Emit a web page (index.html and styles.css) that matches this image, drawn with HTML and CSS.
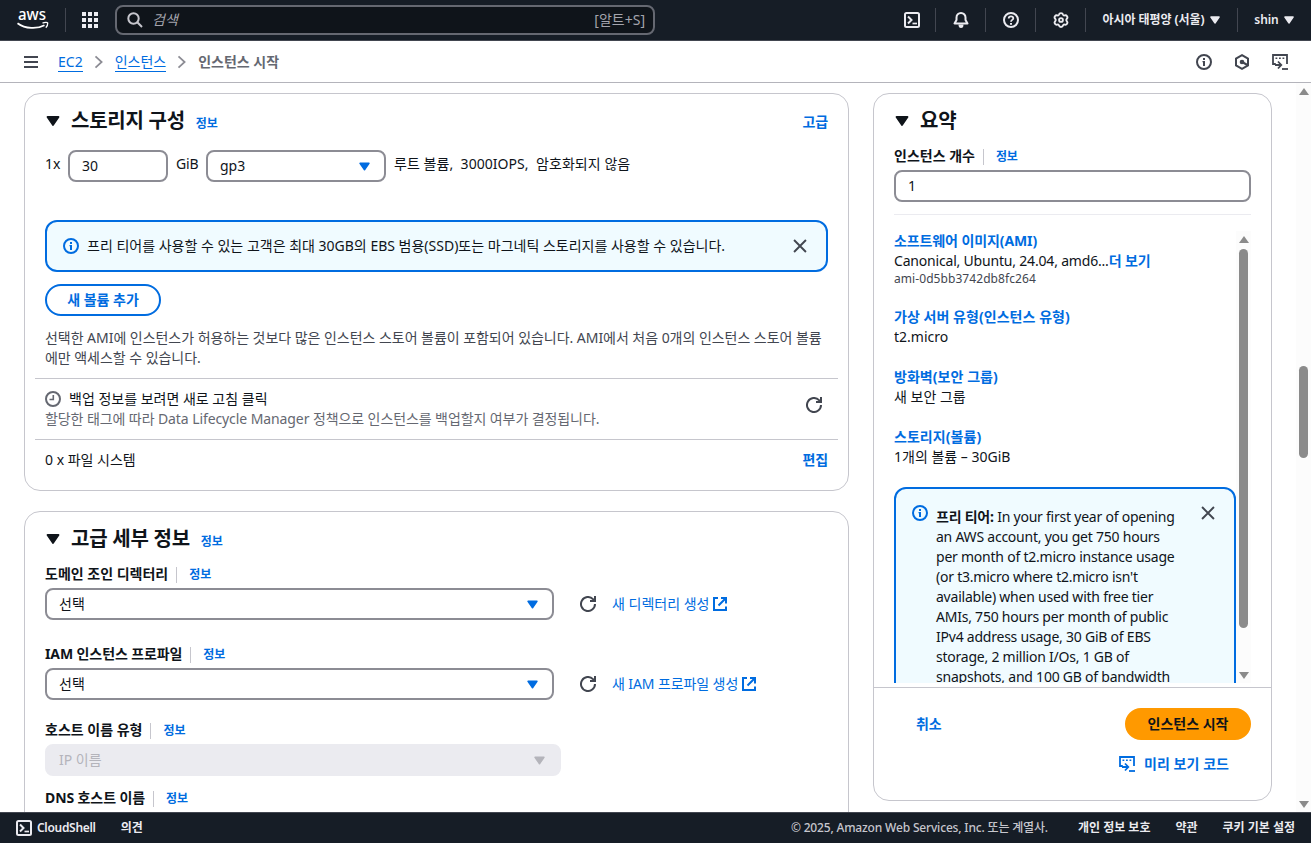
FILE: index.html
```html
<!DOCTYPE html>
<html lang="ko">
<head>
    <meta charset="UTF-8">
    <meta name="viewport" content="width=device-width, initial-scale=1.0">
    <title>인스턴스 시작 | EC2</title>
    <link rel="stylesheet" href="styles.css">
</head>
<body>
    <!-- Shared icons -->
    <svg class="sprite" xmlns="http://www.w3.org/2000/svg">
        <symbol id="i-caret" viewBox="0 0 16 16"><path d="M2.500 4h11L8 12z" fill="currentColor" stroke="currentColor" stroke-width="1.800" stroke-linejoin="round"/></symbol>
        <symbol id="i-shell" viewBox="0 0 16 16"><g fill="none" stroke="currentColor" stroke-width="2"><rect x="1" y="1" width="14" height="14" rx="1.5"/><path d="M4 4.500 7.500 8 4 11.500"/><path d="M8.500 11.500H13" stroke-width="1.700"/></g></symbol>
        <symbol id="i-info" viewBox="0 0 16 16"><circle cx="8" cy="8" r="7" fill="none" stroke="currentColor" stroke-width="2"/><path d="M7 4h2v2H7zM6.500 7H9v5H7V8.200h-.5z" fill="currentColor"/></symbol>
        <symbol id="i-close" viewBox="0 0 16 16"><path d="m1.200 1.200 13.600 13.600M14.800 1.200 1.200 14.800" fill="none" stroke="currentColor" stroke-width="2.200"/></symbol>
        <symbol id="i-refresh" viewBox="0 0 16 16"><g fill="none" stroke="currentColor" stroke-width="2"><path d="M15 8a7 7 0 1 1-2-4.900L14.600 5"/><path d="M15 0v5h-5"/></g></symbol>
        <symbol id="i-external" viewBox="0 0 16 16"><g fill="none" stroke="currentColor" stroke-width="2"><path d="M6 2H2v12h12v-3.500"/><path d="M9 2h5v5.500M14 2 6.500 9.500"/></g></symbol>
        <symbol id="i-code" viewBox="0 0 16 16"><g fill="none" stroke="currentColor" stroke-width="1.800"><path d="M3.800 10H1V1h14v9"/><path d="M3 11h6M6 7.500 9.300 11 6 14.500"/><path d="M10 15h6"/></g><path d="M3.500 3.500h1.800v1.500H3.500zM7 3.500h1.800v1.500H7zM10.500 3.500h1.800v1.500h-1.800z" fill="currentColor"/></symbol>
        <symbol id="i-chevron" viewBox="0 0 16 16"><path d="m4 1.500 7 6.500-7 6.500" fill="none" stroke="currentColor" stroke-width="2"/></symbol>
    </svg>

    <!-- Global navigation -->
    <header class="topnav">
        <svg class="aws-logo" viewBox="0 0 32 22">
            <text x="1" y="11" textLength="28" lengthAdjust="spacingAndGlyphs">aws</text>
            <path d="M.5 14.200C8.500 20 20 20.300 27.500 16.200" fill="none" stroke="#fff" stroke-width="1.700"/>
            <path d="M25.500 14.200c2-1 5.300-1 5.200-.2.100 2-.6 3.600-1.900 4.800" fill="none" stroke="#fff" stroke-width="1.300"/>
        </svg>
        <span class="nav-line"></span>
        <svg class="apps" viewBox="0 0 16 16" fill="currentColor"><path d="M0 0h4v4H0zM6 0h4v4H6zM12 0h4v4h-4zM0 6h4v4H0zM6 6h4v4H6zM12 6h4v4h-4zM0 12h4v4H0zM6 12h4v4H6zM12 12h4v4h-4z"/></svg>
        <div class="search">
            <svg class="icon" viewBox="0 0 16 16"><g fill="none" stroke="currentColor" stroke-width="2"><circle cx="6.500" cy="6.500" r="5.200"/><path d="m10.300 10.300 4.700 4.700"/></g></svg>
            <em>검색</em>
            <span class="shortcut">[알트+S]</span>
        </div>
        <nav class="nav-tools">
            <a class="tool"><svg class="icon"><use href="#i-shell"/></svg></a>
            <a class="tool"><svg class="icon" viewBox="0 0 16 16"><path d="M1.500 11.500h13L12.500 8V5.500a4.500 4.500 0 0 0-9 0V8z" fill="none" stroke="currentColor" stroke-width="2" stroke-linejoin="round"/><path d="M5.500 12.500h5a2.500 3.500 0 0 1-5 0z" fill="currentColor"/></svg></a>
            <a class="tool"><svg class="icon" viewBox="0 0 16 16"><g fill="none" stroke="currentColor" stroke-width="2"><circle cx="8" cy="8" r="7"/><path d="M5.700 6.500c0-3 4.600-2.800 4.600-.2C10.300 8 8 7.800 8 9.800" stroke-width="1.800"/></g><path d="M7 11h2v1.800H7z" fill="currentColor"/></svg></a>
            <a class="tool"><svg class="icon" viewBox="0 0 16 16"><g fill="none" stroke="currentColor" stroke-width="1.900" stroke-linejoin="round"><path d="M6 2.500C6.500.6 9.500.6 10 2.500c.3.900.9 1.100 1.700.9 2-.6 3.500 1.900 2.200 3.300-.7.800-.7 1.800 0 2.600 1.300 1.400-.2 3.900-2.200 3.300-.8-.2-1.400 0-1.700.9-.5 1.900-3.500 1.900-4 0-.3-.9-.9-1.100-1.700-.9-2 .6-3.500-1.900-2.200-3.300.7-.8.7-1.800 0-2.600C.8 5.300 2.300 2.800 4.300 3.400 5.100 3.600 5.700 3.400 6 2.500z"/><circle cx="8" cy="8" r="1.900"/></g></svg></a>
            <a class="tool region">아시아 태평양 (서울) <svg class="caret"><use href="#i-caret"/></svg></a>
            <a class="tool user">shin <svg class="caret"><use href="#i-caret"/></svg></a>
        </nav>
    </header>

    <!-- Breadcrumbs -->
    <div class="crumb-bar">
        <svg class="menu" viewBox="0 0 14 14"><path d="M0 2h14M0 7h14M0 12h14" stroke="currentColor" stroke-width="2"/></svg>
        <a class="crumb">EC2</a>
        <svg class="sep"><use href="#i-chevron"/></svg>
        <a class="crumb">인스턴스</a>
        <svg class="sep"><use href="#i-chevron"/></svg>
        <span class="crumb-current">인스턴스 시작</span>
        <div class="crumb-tools">
            <svg class="icon"><use href="#i-info"/></svg>
            <svg class="icon" viewBox="0 0 16 16"><g fill="none" stroke="currentColor" stroke-width="2"><path d="m8 1.200 6 3.400v6.800l-6 3.400-6-3.400V4.600z"/><path d="m8 8 5.500 3"/></g><circle cx="8" cy="8" r="2.300" fill="currentColor"/></svg>
            <svg class="icon"><use href="#i-code"/></svg>
        </div>
    </div>

    <main class="page">
        <div class="forms">
            <!-- Storage -->
            <section class="card storage">
                <div class="card-head">
                    <svg class="toggle"><use href="#i-caret"/></svg>
                    <h2>스토리지 구성</h2>
                    <a class="info">정보</a>
                    <a class="action">고급</a>
                </div>
                <div class="volume">
                    <span class="count">1x</span>
                    <div class="field size">30</div>
                    <span class="unit">GiB</span>
                    <div class="field select type">gp3<svg class="caret"><use href="#i-caret"/></svg></div>
                    <span class="volume-note">루트 볼륨,&nbsp; 3000IOPS,&nbsp; 암호화되지 않음</span>
                </div>
                <div class="alert storage-alert">
                    <svg class="icon"><use href="#i-info"/></svg>
                    <p>프리 티어를 사용할 수 있는 고객은 최대 30GB의 EBS 범용(SSD)또는 마그네틱 스토리지를 사용할 수 있습니다.</p>
                    <svg class="close"><use href="#i-close"/></svg>
                </div>
                <button class="btn outline">새 볼륨 추가</button>
                <p class="note">선택한 AMI에 인스턴스가 허용하는 것보다 많은 인스턴스 스토어 볼륨이 포함되어 있습니다. AMI에서 처음 0개의 인스턴스 스토어 볼륨<br>에만 액세스할 수 있습니다.</p>
                <div class="strip backup">
                    <div>
                        <p class="backup-title"><svg class="icon" viewBox="0 0 16 16"><g fill="none" stroke="currentColor" stroke-width="2"><circle cx="8" cy="8" r="7"/><path d="M8.300 4v4.500H4.500" stroke-width="1.600"/></g></svg>백업 정보를 보려면 새로 고침 클릭</p>
                        <p class="muted">할당한 태그에 따라 Data Lifecycle Manager 정책으로 인스턴스를 백업할지 여부가 결정됩니다.</p>
                    </div>
                    <svg class="icon refresh"><use href="#i-refresh"/></svg>
                </div>
                <div class="strip files">
                    <span>0 x 파일 시스템</span>
                    <a class="action">편집</a>
                </div>
            </section>

            <!-- Advanced details -->
            <section class="card advanced">
                <div class="card-head">
                    <svg class="toggle"><use href="#i-caret"/></svg>
                    <h2>고급 세부 정보</h2>
                    <a class="info">정보</a>
                </div>
                <div class="label"><b>도메인 조인 디렉터리</b><a class="info">정보</a></div>
                <div class="field-row">
                    <div class="field select">선택<svg class="caret"><use href="#i-caret"/></svg></div>
                    <svg class="icon refresh"><use href="#i-refresh"/></svg>
                    <a class="create">새 디렉터리 생성<svg class="icon"><use href="#i-external"/></svg></a>
                </div>
                <div class="label"><b class="mixed">IAM 인스턴스 프로파일</b><a class="info">정보</a></div>
                <div class="field-row">
                    <div class="field select">선택<svg class="caret"><use href="#i-caret"/></svg></div>
                    <svg class="icon refresh"><use href="#i-refresh"/></svg>
                    <a class="create mixed">새 IAM 프로파일 생성<svg class="icon"><use href="#i-external"/></svg></a>
                </div>
                <div class="label host"><b>호스트 이름 유형</b><a class="info">정보</a></div>
                <div class="field select disabled">IP 이름<svg class="caret"><use href="#i-caret"/></svg></div>
                <div class="label dns"><b class="mixed">DNS 호스트 이름</b><a class="info">정보</a></div>
            </section>
        </div>

        <!-- Summary -->
        <aside class="card summary">
            <div class="summary-top">
                <div class="card-head">
                    <svg class="toggle"><use href="#i-caret"/></svg>
                    <h2>요약</h2>
                </div>
                <div class="label"><b>인스턴스 개수</b><a class="info">정보</a></div>
                <div class="field">1</div>
            </div>
            <div class="summary-scroll">
                <div class="summary-items">
                    <dl>
                        <dt>소프트웨어 이미지(AMI)</dt>
                        <dd><span class="latin">Canonical, Ubuntu, 24.04, amd6...</span><a class="action">더 보기</a></dd>
                        <dd class="ami-id">ami-0d5bb3742db8fc264</dd>
                        <dt class="wide">가상 서버 유형(인스턴스 유형)</dt>
                        <dd>t2.micro</dd>
                        <dt class="wide">방화벽(보안 그룹)</dt>
                        <dd>새 보안 그룹</dd>
                        <dt class="wide">스토리지(볼륨)</dt>
                        <dd>1개의 볼륨 – 30GiB</dd>
                    </dl>
                    <div class="alert tier-alert">
                        <svg class="icon"><use href="#i-info"/></svg>
                        <p><b>프리 티어:</b> In your first year of opening<br>an AWS account, you get 750 hours<br>per month of t2.micro instance usage<br>(or t3.micro where t2.micro isn't<br>available) when used with free tier<br>AMIs, 750 hours per month of public<br>IPv4 address usage, 30 GiB of EBS<br>storage, 2 million I/Os, 1 GB of<br>snapshots, and 100 GB of bandwidth</p>
                        <svg class="close"><use href="#i-close"/></svg>
                    </div>
                </div>
                <div class="scrollbar inner">
                    <span class="arrow up"></span>
                    <span class="thumb"></span>
                    <span class="arrow down"></span>
                </div>
            </div>
            <div class="summary-actions">
                <div class="buttons">
                    <a class="action">취소</a>
                    <button class="btn primary">인스턴스 시작</button>
                </div>
                <a class="action preview"><svg class="icon"><use href="#i-code"/></svg>미리 보기 코드</a>
            </div>
        </aside>

        <div class="scrollbar outer">
            <span class="arrow up"></span>
            <span class="thumb"></span>
            <span class="arrow down"></span>
        </div>
    </main>

    <footer class="footer">
        <svg class="icon"><use href="#i-shell"/></svg>
        <a class="cloudshell">CloudShell</a>
        <a class="feedback">의견</a>
        <span class="copyright">© 2025, Amazon Web Services, Inc. 또는 계열사.</span>
        <a>개인 정보 보호</a>
        <a>약관</a>
        <a>쿠키 기본 설정</a>
    </footer>
</body>
</html>
```
FILE: styles.css
```css
* {
    box-sizing: border-box;
}

body {
    margin: 0;
    height: 843px;
    display: flex;
    flex-direction: column;
    overflow: hidden;
    background: #fff;
    color: #0f141a;
    font-family: "Noto Sans", "Noto Sans CJK KR", sans-serif;
    font-size: 14px;
    line-height: 20px;
}

p, h2, dl, dd {
    margin: 0;
}

svg {
    display: block;
    flex: none;
}

.sprite {
    display: none;
}

.icon {
    width: 16px;
    height: 16px;
}

.caret {
    width: 12px;
    height: 12px;
}

.mixed {
    letter-spacing: -0.1px;
}

.latin {
    letter-spacing: -0.19px;
}

/* Global navigation */
.topnav {
    height: 41px;
    flex: none;
    display: flex;
    align-items: center;
    padding-left: 17px;
    background: #161d26;
    border-bottom: 1px solid #424650;
    color: #ebebf0;
}

.aws-logo {
    width: 32px;
    height: 22px;
    overflow: visible;
    fill: #fff;
    font: 500 17px "Noto Sans", sans-serif;
}

.nav-line {
    width: 1px;
    height: 24px;
    margin: 0 16px;
    background: #424650;
}

.apps {
    width: 16px;
    height: 16px;
}

.search {
    width: 540px;
    height: 30px;
    margin-left: 17px;
    padding: 0 8px 0 10px;
    display: flex;
    align-items: center;
    gap: 9px;
    background: #0f141a;
    border: 2px solid #656871;
    border-radius: 8px;
    color: #a4a4ad;
}

.search .icon {
    color: #c6c6cd;
}

.shortcut {
    margin-left: auto;
}

.nav-tools {
    margin-left: auto;
    display: flex;
    align-items: center;
    font-size: 12px;
    font-weight: 700;
    letter-spacing: -0.05px;
}

.tool {
    width: 50px;
    height: 24px;
    display: flex;
    align-items: center;
    justify-content: center;
    gap: 4px;
    border-left: 1px solid #424650;
}

.tool:first-child {
    padding-left: 4px;
    border-left: none;
}

.region {
    width: 152px;
}

.user {
    width: 74px;
    font-weight: 600;
}

/* Breadcrumbs */
.crumb-bar {
    height: 42px;
    flex: none;
    display: flex;
    align-items: center;
    padding: 0 23px 0 24px;
    border-bottom: 1px solid #b4b4bb;
    color: #424650;
}

.menu {
    width: 14px;
    height: 14px;
    margin-right: 20px;
}

.crumb {
    padding-top: 1px;
    line-height: 19px;
    color: #006ce0;
    border-bottom: 1px solid #006ce0;
}

.sep {
    width: 14px;
    height: 14px;
    margin: 0 9px;
    color: #8c8c94;
}

.crumb-current {
    color: #656871;
    font-weight: 700;
}

.crumb-tools {
    margin-left: auto;
    display: flex;
    gap: 22px;
}

/* Page body */
.page {
    height: 729px;
    flex: none;
    display: flex;
    padding: 10px 0 0 24px;
    overflow: hidden;
}

.forms {
    width: 825px;
    display: flex;
    flex-direction: column;
    gap: 20px;
}

.card {
    border: 1px solid #c6c6cd;
    border-radius: 16px;
    background: #fff;
}

.card-head {
    height: 24px;
    display: flex;
    align-items: center;
}

.card-head h2 {
    margin: 0 11px 0 10px;
    font-size: 20px;
    line-height: 24px;
    letter-spacing: -0.25px;
}

.toggle {
    width: 16px;
    height: 16px;
}

.info {
    padding-top: 6px;
    color: #006ce0;
    font-size: 12px;
    font-weight: 700;
    letter-spacing: -0.1px;
}

.action {
    color: #006ce0;
    font-weight: 700;
    letter-spacing: -0.1px;
}

.card-head .action {
    margin-left: auto;
    padding-top: 1px;
}

.field {
    height: 32px;
    display: flex;
    align-items: center;
    padding: 0 12px;
    border: 2px solid #8c8c94;
    border-radius: 8px;
}

.select {
    justify-content: space-between;
}

.btn {
    height: 32px;
    padding: 0 20px;
    border: 2px solid #006ce0;
    border-radius: 16px;
    background: #fff;
    color: #006ce0;
    font: inherit;
    font-weight: 700;
}

.alert {
    display: flex;
    border: 2px solid #006ce0;
    border-radius: 12px;
    background: #f0fbff;
}

.alert .icon {
    color: #006ce0;
}

.close {
    width: 14px;
    height: 14px;
    margin-left: auto;
    color: #424650;
}

/* Storage card */
.storage {
    height: 398px;
    flex: none;
    padding: 15px 20px 0;
}

.volume {
    margin-top: 17px;
    display: flex;
    height: 32px;
}

.count,
.unit,
.volume-note {
    padding-top: 4px;
}

.count {
    width: 23px;
}

.size {
    width: 100px;
}

.unit {
    width: 38px;
    padding-left: 8px;
    letter-spacing: -0.2px;
}

.type {
    width: 180px;
    margin-right: 8px;
}

.volume-note {
    letter-spacing: 0.05px;
}

.storage-alert {
    height: 52px;
    margin-top: 38px;
    align-items: center;
    padding: 0 19px 0 16px;
}

.storage-alert p {
    margin-left: 8px;
}

.outline {
    width: 116px;
    margin-top: 12px;
    display: block;
}

.note {
    margin: 12px 0 10px;
    color: #424650;
    letter-spacing: -0.04px;
    white-space: nowrap;
}

.strip {
    margin: 0 -10px;
    padding: 0 10px;
    display: flex;
    align-items: center;
    justify-content: space-between;
    border-top: 1px solid #c6c6cd;
}

.backup {
    height: 61px;
}

.backup .refresh {
    margin: 0 6px 8px 0;
}

.backup-title {
    display: flex;
    align-items: center;
    gap: 8px;
}

.backup-title .icon,
.muted {
    color: #656871;
}

.muted {
    letter-spacing: -0.09px;
}

.files {
    height: 40px;
}

/* Advanced card */
.advanced {
    height: 398px;
    flex: none;
    padding: 15px 20px 0;
}

.label {
    height: 20px;
    display: flex;
    align-items: center;
}

.label .info {
    height: 16px;
    margin: 2px 0 0 8px;
    padding: 0 0 0 12px;
    border-left: 1px solid #c6c6cd;
    line-height: 16px;
}

.advanced .card-head + .label {
    margin-top: 13px;
}

.field-row {
    margin: 4px 0 24px;
    display: flex;
    align-items: center;
}

.field-row .field {
    width: 509px;
}

.refresh {
    color: #424650;
}

.field-row .refresh {
    margin: 0 16px 0 26px;
}

.select .caret {
    width: 13px;
    height: 13px;
    margin-right: 1px;
    color: #006ce0;
}

.create {
    display: flex;
    align-items: center;
    gap: 3px;
    color: #006ce0;
}

.host {
    margin: -4px 0 4px;
}

.disabled {
    width: 516px;
    border-color: #ebebf0;
    background: #ebebf0;
    color: #b4b4bb;
}

.disabled .caret {
    color: #b4b4bb;
}

.dns {
    margin-top: 12px;
}

/* Summary card */
.summary {
    width: 399px;
    height: 708px;
    margin-left: 24px;
    display: flex;
    flex-direction: column;
    overflow: hidden;
}

.summary-top {
    height: 121px;
    margin: 0 20px;
    padding-top: 15px;
    border-bottom: 1px solid #ebebf0;
}

.summary-top .label {
    margin: 13px 0 4px;
}

.summary-scroll {
    height: 472px;
    display: flex;
    margin: 0 20px;
    padding: 16px 0 4px;
}

.summary-items {
    width: 342px;
    height: 452px;
    overflow: hidden;
}

dt {
    color: #006ce0;
    font-weight: 700;
    letter-spacing: -0.1px;
}

.wide {
    letter-spacing: 0.05px;
}

dd {
    margin-bottom: 20px;
}

dd:has(+ .ami-id) {
    margin-bottom: 0;
}

.ami-id {
    height: 16px;
    color: #424650;
    font-size: 12px;
    line-height: 16px;
    letter-spacing: 0.07px;
}

.tier-alert {
    padding: 15px 19px 0 16px;
    letter-spacing: -0.23px;
    height: 260px;
}

.tier-alert .icon {
    margin-top: 1px;
}

.tier-alert p {
    margin: 3px 0 0 8px;
    white-space: nowrap;
}

.tier-alert .close {
    margin-top: 2px;
}

.summary-actions {
    display: flex;
    flex-direction: column;
    padding: 20px 20px 0;
    border-top: 1px solid #c6c6cd;
}

.buttons {
    display: flex;
    align-items: center;
    justify-content: space-between;
    padding-left: 22px;
}

.primary {
    width: 126px;
    border-color: #ff9900;
    background: #ff9900;
    color: #0f141a;
}

.preview {
    margin: 14px 22px 0 0;
    display: flex;
    align-items: center;
    align-self: flex-end;
    gap: 9px;
    letter-spacing: 0.05px;
}

/* Scrollbars */
.scrollbar {
    width: 15px;
    display: flex;
    flex-direction: column;
    align-items: center;
    background: #fcfcfc;
}

.arrow {
    border: 5px solid transparent;
}

.arrow.up {
    border-top: none;
    border-bottom: 7px solid #8b8b8b;
}

.arrow.down {
    margin-top: auto;
    border-bottom: none;
    border-top: 7px solid #8b8b8b;
}

.thumb {
    width: 9px;
    border-radius: 5px;
    background: #8b8b8b;
}

.inner {
    padding: 5px 0 4px;
}

.inner .thumb {
    height: 379px;
    margin-top: 6px;
}

.outer {
    margin: -10px 0 0 auto;
    padding: 5px 0 4px;
}

.outer .thumb {
    height: 92px;
    margin-top: 271px;
}

/* Footer */
.footer {
    height: 31px;
    flex: none;
    display: flex;
    align-items: center;
    padding: 0 16px;
    background: #161d26;
    border-top: 1px solid #424650;
    color: #ebebf0;
    font-size: 12px;
    font-weight: 600;
    letter-spacing: -0.1px;
}

.cloudshell {
    margin-left: 5px;
    letter-spacing: -0.3px;
}

.feedback {
    margin-left: 25px;
}

.copyright {
    margin-left: auto;
    margin-right: 5px;
    color: #c6c6cd;
    font-weight: 500;
    letter-spacing: -0.17px;
}

.copyright ~ a {
    margin-left: 25px;
    letter-spacing: 0;
}
```
